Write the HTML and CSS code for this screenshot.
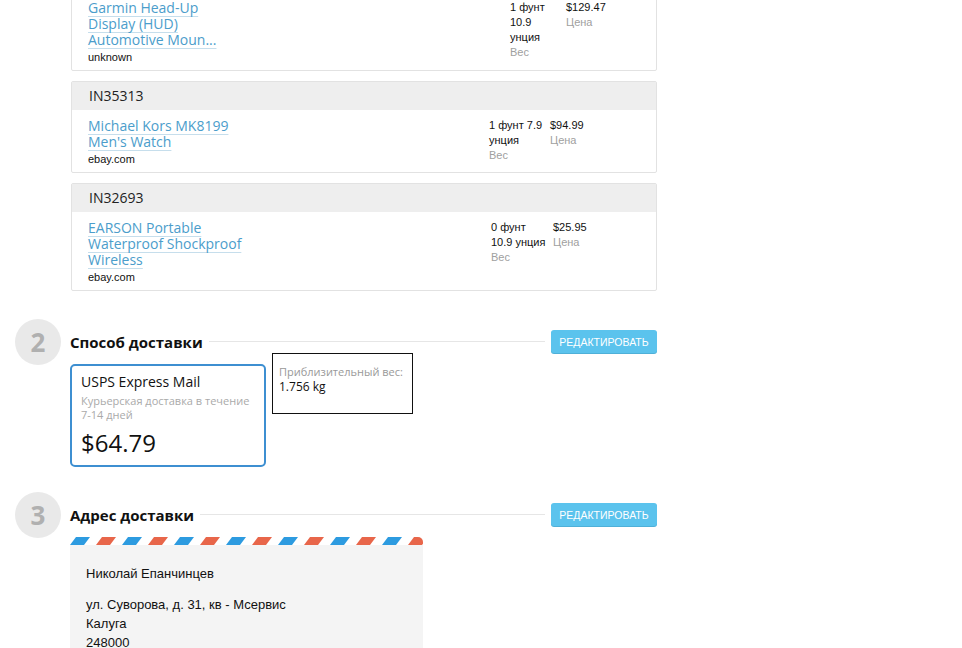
FILE: index.html
```html
<!DOCTYPE html>
<html lang="ru">
<head>
    <meta charset="UTF-8">
    <meta name="viewport" content="width=device-width, initial-scale=1.0">
    <title>Оформление заказа</title>
    <link rel="stylesheet" href="styles.css">
</head>
<body>
    <div class="page">

        <div class="orders">
            <div class="order order--a">
                <div class="order-head">IN35290</div>
                <div class="order-body">
                    <div class="product">
                        <div class="product-name"><a href="#">Garmin Head-Up Display (HUD) Automotive Moun...</a></div>
                        <div class="product-store">unknown</div>
                    </div>
                    <div class="spec">
                        <div class="spec-value">1 фунт 10.9 унция</div>
                        <div class="spec-label">Вес</div>
                    </div>
                    <div class="spec">
                        <div class="spec-value">$129.47</div>
                        <div class="spec-label">Цена</div>
                    </div>
                </div>
            </div>

            <div class="order order--b">
                <div class="order-head">IN35313</div>
                <div class="order-body">
                    <div class="product">
                        <div class="product-name"><a href="#">Michael Kors MK8199 Men's Watch</a></div>
                        <div class="product-store">ebay.com</div>
                    </div>
                    <div class="spec">
                        <div class="spec-value">1 фунт 7.9 унция</div>
                        <div class="spec-label">Вес</div>
                    </div>
                    <div class="spec">
                        <div class="spec-value">$94.99</div>
                        <div class="spec-label">Цена</div>
                    </div>
                </div>
            </div>

            <div class="order order--c">
                <div class="order-head">IN32693</div>
                <div class="order-body">
                    <div class="product">
                        <div class="product-name"><a href="#">EARSON Portable Waterproof Shockproof Wireless</a></div>
                        <div class="product-store">ebay.com</div>
                    </div>
                    <div class="spec">
                        <div class="spec-value">0 фунт 10.9 унция</div>
                        <div class="spec-label">Вес</div>
                    </div>
                    <div class="spec">
                        <div class="spec-value">$25.95</div>
                        <div class="spec-label">Цена</div>
                    </div>
                </div>
            </div>
        </div>

        <!-- step 2: delivery method -->
        <div class="step step--delivery">
            <div class="step-num">2</div>
            <div class="step-main">
                <div class="step-head">
                    <h2 class="step-title">Способ доставки</h2>
                    <div class="step-rule"></div>
                    <button class="btn-edit">Редактировать</button>
                </div>
                <div class="delivery">
                    <div class="ship-option">
                        <div class="ship-name">USPS Express Mail</div>
                        <div class="ship-desc">Курьерская доставка в течение 7-14 дней</div>
                        <div class="ship-price">$64.79</div>
                    </div>
                    <div class="weight-box">
                        <div class="weight-label">Приблизительный вес:</div>
                        <div class="weight-value">1.756 kg</div>
                    </div>
                </div>
            </div>
        </div>

        <!-- step 3: address -->
        <div class="step step--address">
            <div class="step-num">3</div>
            <div class="step-main">
                <div class="step-head">
                    <h2 class="step-title">Адрес доставки</h2>
                    <div class="step-rule"></div>
                    <button class="btn-edit">Редактировать</button>
                </div>
                <div class="envelope">
                    <div class="envelope-stripes">
                        <svg width="100%" height="8">
                            <defs>
                                <pattern id="airmail" width="52" height="8" patternUnits="userSpaceOnUse">
                                    <polygon points="6,0 20,0 14,8 0,8" fill="#2d9be0"/>
                                    <polygon points="32,0 46,0 40,8 26,8" fill="#e8664a"/>
                                </pattern>
                            </defs>
                            <rect width="100%" height="8" fill="url(#airmail)"/>
                        </svg>
                    </div>
                    <div class="envelope-body">
                        <p class="addr-name">Николай Епанчинцев</p>
                        <p class="addr-lines">ул. Суворова, д. 31, кв - Мсервис<br>Калуга<br>248000</p>
                    </div>
                </div>
            </div>
        </div>

    </div>
</body>
</html>
```

FILE: styles.css
```css
body {
    margin: 0;
    font-family: "Open Sans", "DejaVu Sans", sans-serif;
    background: #fff;
    color: #222;
}
.page {
    padding-left: 15px;
    width: 642px;
}

/* order list */
.orders {
    margin: -37px 0 0 56px;
    display: flex;
    flex-direction: column;
    gap: 10px;
}
.order {
    border: 1px solid #e2e2e2;
    border-radius: 2px;
}
.order-head {
    background: #eeeeee;
    height: 28px;
    line-height: 28px;
    padding-left: 17px;
    font-size: 14px;
    color: #222;
}
.order-body {
    display: grid;
    grid-template-columns: var(--name-w) var(--weight-w) auto;
    column-gap: var(--gap);
    align-items: start;
    padding: 8px 16px 6px;
}
.order--a {
    --name-w: 410px;
    --weight-w: 44px;
    --gap: 12px;
}
.order--b {
    --name-w: 394px;
    --weight-w: 54px;
    --gap: 7px;
}
.order--c {
    --name-w: 397px;
    --weight-w: 56px;
    --gap: 6px;
}
.product-name {
    width: 158px;
    font-size: 14px;
    line-height: 16px;
}
.product-name a {
    color: #4b9dcb;
    text-decoration: underline;
    text-decoration-color: #c6deec;
    text-underline-offset: 3px;
}
.product-store {
    margin-top: 2px;
    font: 11px/14px "Liberation Sans", Arial, sans-serif;
    color: #111;
}
.spec {
    font: 11px/15px "Liberation Sans", Arial, sans-serif;
    color: #111;
}
.spec-label {
    color: #a0a0a0;
}

/* steps */
.step {
    display: flex;
    gap: 9px;
}
.step--delivery {
    margin-top: 28px;
}
.step--address {
    margin-top: 25px;
}
.step-num {
    flex-shrink: 0;
    width: 46px;
    height: 46px;
    border-radius: 50%;
    background: #e9e9e9;
    color: #b0b0b0;
    font-size: 26px;
    font-weight: 700;
    display: flex;
    align-items: center;
    justify-content: center;
}
.step-main {
    flex: 1;
    padding-top: 11px;
}
.step-head {
    display: flex;
    align-items: center;
    height: 23px;
}
.step-title {
    margin: 0;
    font-size: 15px;
    font-weight: 700;
    color: #111;
}
.step-rule {
    flex: 1;
    height: 1px;
    background: #e6e6e6;
    margin: 0 6px;
}
.btn-edit {
    width: 106px;
    height: 23px;
    padding: 0;
    border: none;
    border-radius: 3px;
    background: #5bc3ed;
    box-shadow: 0 1px 0 #4fb0d8;
    color: #fff;
    font: 10.5px "Liberation Sans", Arial, sans-serif;
    text-transform: uppercase;
    cursor: pointer;
}

/* delivery method */
.delivery {
    display: flex;
    align-items: flex-start;
    gap: 6px;
}
.ship-option {
    margin-top: 11px;
    width: 196px;
    box-sizing: border-box;
    border: 2px solid #3d8fd1;
    border-radius: 5px;
    padding: 7px 9px;
}
.ship-name {
    font-size: 14px;
    line-height: 18px;
    color: #111;
}
.ship-desc {
    margin-top: 3px;
    font-size: 11px;
    line-height: 14px;
    color: #aaa;
}
.ship-price {
    margin-top: 6px;
    font-size: 24px;
    line-height: 30px;
    color: #111;
}
.weight-box {
    width: 141px;
    height: 61px;
    box-sizing: border-box;
    border: 1px solid #111;
    padding: 11px 6px 0;
}
.weight-label {
    font: 11px/14px "Open Sans", sans-serif;
    color: #999;
}
.weight-value {
    font-size: 12px;
    line-height: 16px;
    color: #111;
}

/* address envelope */
.envelope {
    margin-top: 11px;
    width: 353px;
}
.envelope-stripes {
    height: 8px;
    border-top-right-radius: 5px;
    overflow: hidden;
}
.envelope-stripes svg {
    display: block;
}
.envelope-body {
    background: #f4f4f4;
    padding: 19px 16px;
    font: 13px/19px "Liberation Sans", Arial, sans-serif;
    color: #111;
}
.envelope-body p {
    margin: 0;
}
.addr-name {
    margin-bottom: 12px !important;
}
```
